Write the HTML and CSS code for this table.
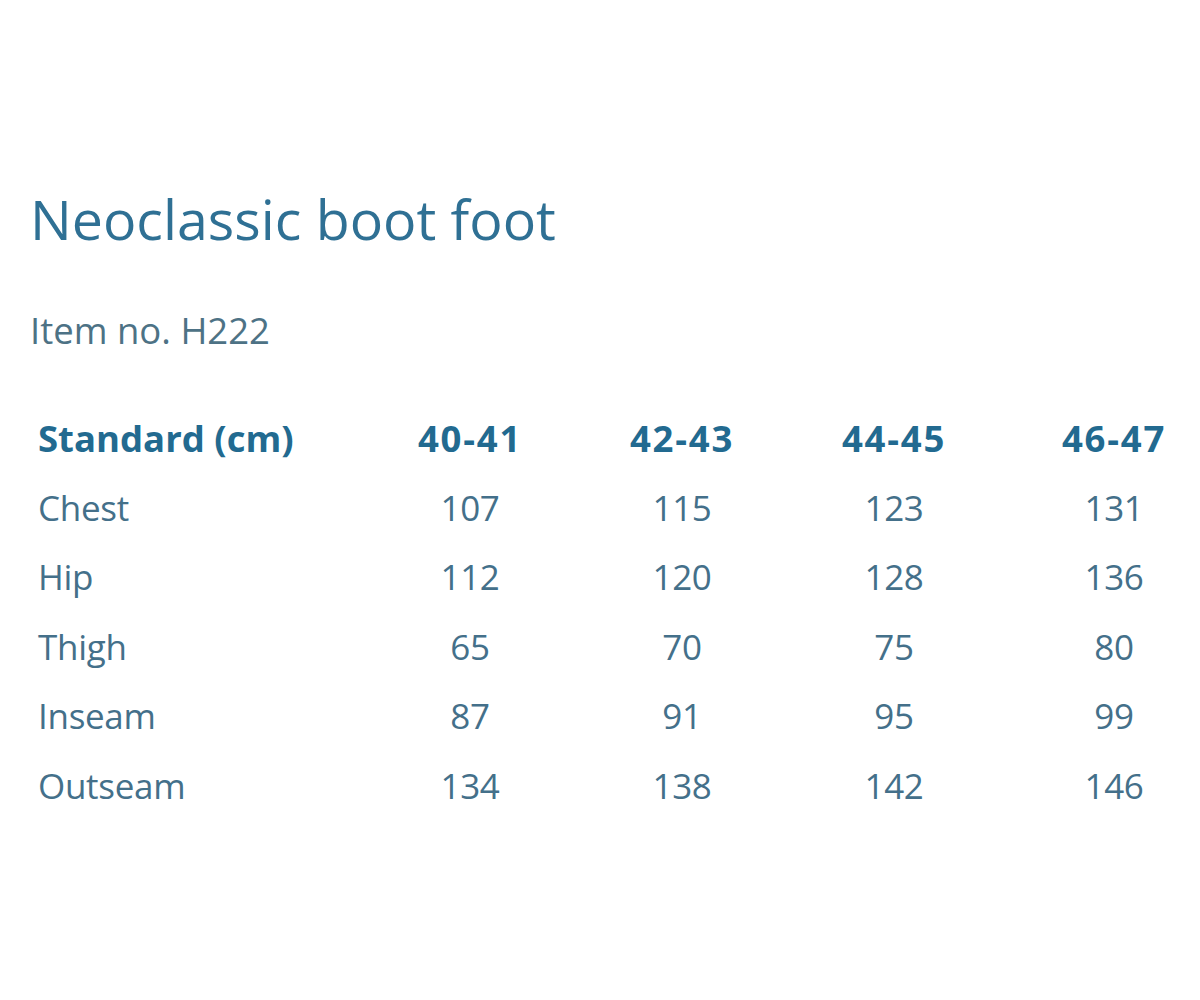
FILE: index.html
```html
<!DOCTYPE html>
<html lang="en">
<head>
<meta charset="utf-8">
<title>Neoclassic boot foot</title>
<link rel="stylesheet" href="styles.css">
</head>
<body>
<main class="sheet">
  <h1 class="title">Neoclassic boot foot</h1>
  <p class="item">Item no. H222</p>
  <div class="table">
    <div class="row head">
      <span class="label">Standard (cm)</span><span class="cell">40-41</span><span class="cell">42-43</span><span class="cell">44-45</span><span class="cell last">46-47</span>
    </div>
    <div class="row">
      <span class="label">Chest</span><span class="cell">107</span><span class="cell">115</span><span class="cell">123</span><span class="cell last">131</span>
    </div>
    <div class="row">
      <span class="label">Hip</span><span class="cell">112</span><span class="cell">120</span><span class="cell">128</span><span class="cell last">136</span>
    </div>
    <div class="row">
      <span class="label">Thigh</span><span class="cell">65</span><span class="cell">70</span><span class="cell">75</span><span class="cell last">80</span>
    </div>
    <div class="row">
      <span class="label">Inseam</span><span class="cell">87</span><span class="cell">91</span><span class="cell">95</span><span class="cell last">99</span>
    </div>
    <div class="row">
      <span class="label">Outseam</span><span class="cell">134</span><span class="cell">138</span><span class="cell">142</span><span class="cell last">146</span>
    </div>
  </div>
</main>
</body>
</html>
```
FILE: styles.css
```css
html, body {
  margin: 0;
  padding: 0;
  background: #ffffff;
}
body {
  font-family: "Open Sans", "Noto Sans", sans-serif;
  color: #44708a;
}
.sheet {
  width: 1200px;
  height: 1000px;
  padding-top: 179px;
  box-sizing: border-box;
}
.title {
  margin: 0 0 0 30px;
  font-size: 55.5px;
  font-weight: 400;
  line-height: 80px;
  color: #2f7094;
}
.item {
  margin: 46px 0 0 30px;
  font-size: 36.5px;
  line-height: 50px;
  color: #4d7285;
}
.table {
  margin-top: 48px;
  padding-left: 38px;
  display: flex;
  flex-direction: column;
}
.row {
  display: grid;
  grid-template-columns: 326px 212px 212px 212px 200px;
  height: 69.5px;
  align-items: center;
  font-size: 35px;
  letter-spacing: -0.3px;
}
.row.head {
  font-weight: 700;
  color: #226a90;
  font-size: 36.5px;
  letter-spacing: 0;
}
.row.head .cell {
  letter-spacing: 1.8px;
}
.label {
  white-space: nowrap;
}
.cell {
  text-align: center;
}
.cell.last {
  padding-left: 28px;
}
```
